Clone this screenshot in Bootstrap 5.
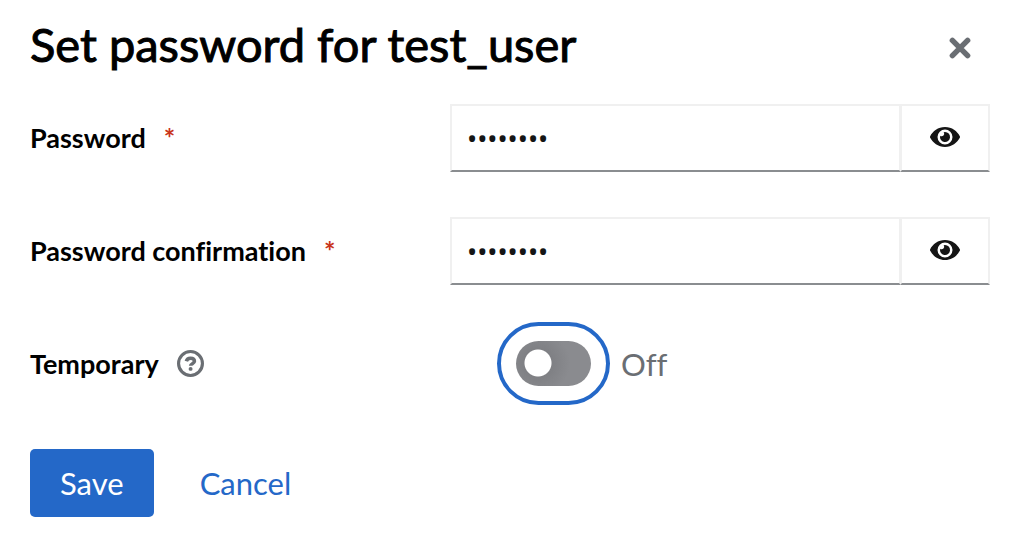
<!DOCTYPE html>
<html lang="en">
<head>
<meta charset="utf-8">
<meta name="viewport" content="width=device-width, initial-scale=1">
<title>Set password</title>
<link href="https://cdn.jsdelivr.net/npm/bootstrap@5.3.0/dist/css/bootstrap.min.css" rel="stylesheet">
<style>
  :root { --blue: #2468c8; --grey: #6a6e73; --line: #f0f0f0; --line-dark: #8a8d90; --ink: #151515; }
  body { font-family: Lato, "Open Sans", sans-serif; font-size: 31px; line-height: 36px; font-variant-ligatures: none; color: #000; background: #fff; }
  .dialog { padding: 18px 34px 24px 30px; }
  .dialog-header { margin-bottom: 26px; }
  .dialog-title { font-size: 47px; line-height: 52px; font-weight: 400; -webkit-text-stroke: 1px currentColor; }
  .btn-dismiss { width: 60px; height: 60px; color: var(--grey); }
  .form-lines { row-gap: 45px; }
  .form-line { display: grid; grid-template-columns: 7fr 9fr; align-items: center; min-height: 67px; }
  .field-label { font-size: 27px; font-weight: 700; gap: 18px; }
  .required-mark { color: #c9341a; font-size: 27px; font-weight: 700; }
  .secret { font-family: "Noto Sans", sans-serif; font-size: 27px; height: 68px; padding: 0 15px; color: var(--ink); }
  .secret, .btn-reveal { border: 2px solid var(--line); border-bottom-color: var(--line-dark); border-radius: 0; }
  .btn-reveal { width: 90px; color: var(--ink); background: #fff; }
  .btn-reveal svg { display: block; margin: 0 auto 2px; }
  .toggle-line { padding-left: 66px; gap: 30px; color: var(--grey); }
  .toggle-line .toggle { flex: none; width: 75px; height: 45px; margin: 0; border: 0; border-radius: 23px; background: #8a8b8f radial-gradient(circle at 22px 22px, #fff 13px, #7f8084 14px, #8a8b8f 32px); outline: 4px solid var(--blue); outline-offset: 15px; box-shadow: none; }
  .actions { gap: 16px; margin-top: 7px; }
  .btn-act { font-size: 31px; line-height: 36px; padding: 16px 30px; border: 0; border-radius: 5px; }
  .btn-save { background: var(--blue); color: #fff; }
  .btn-cancel { color: var(--blue); }
</style>
</head>
<body>
<main class="dialog">
  <header class="dialog-header d-flex justify-content-between align-items-start">
    <h1 class="dialog-title m-0">Set password for test_user</h1>
    <button type="button" class="btn btn-dismiss p-0 d-flex align-items-center justify-content-center" aria-label="Close">
      <svg width="22" height="22" viewBox="0 0 22 22" fill="none" stroke="currentColor" stroke-width="5.500" stroke-linecap="round"><path d="M3.400 3.400 18.600 18.600M18.600 3.400 3.400 18.600"/></svg>
    </button>
  </header>
  <form class="form-lines d-grid">
    <div class="form-line">
      <label class="field-label d-flex" for="pw">Password <span class="required-mark" aria-hidden="true">*</span></label>
      <div class="input-group">
        <input id="pw" class="form-control secret" type="password" value="password" required>
        <button type="button" class="btn btn-reveal p-0" aria-label="Show password">
          <svg width="30" height="20" viewBox="0 0 30 20"><path fill="currentColor" fill-rule="evenodd" d="M15 0C8 0 2.800 4.200.2 9.200a1.700 1.700 0 0 0 0 1.600C2.800 15.800 8 20 15 20s12.200-4.200 14.800-9.200a1.700 1.700 0 0 0 0-1.600C27.200 4.200 22 0 15 0Zm0 2.500a7.500 7.500 0 1 1 0 15 7.500 7.500 0 0 1 0-15Z"/><path fill="currentColor" d="M15 5a5 5 0 1 1-4.800 3.700A2.500 2.500 0 0 0 13.700 5.200Q14.300 5 15 5Z"/></svg>
        </button>
      </div>
    </div>
    <div class="form-line">
      <label class="field-label d-flex" for="pw2">Password confirmation <span class="required-mark" aria-hidden="true">*</span></label>
      <div class="input-group">
        <input id="pw2" class="form-control secret" type="password" value="password" required>
        <button type="button" class="btn btn-reveal p-0" aria-label="Show password confirmation">
          <svg width="30" height="20" viewBox="0 0 30 20"><path fill="currentColor" fill-rule="evenodd" d="M15 0C8 0 2.800 4.200.2 9.200a1.700 1.700 0 0 0 0 1.600C2.800 15.800 8 20 15 20s12.200-4.200 14.800-9.200a1.700 1.700 0 0 0 0-1.600C27.200 4.200 22 0 15 0Zm0 2.500a7.500 7.500 0 1 1 0 15 7.500 7.500 0 0 1 0-15Z"/><path fill="currentColor" d="M15 5a5 5 0 1 1-4.800 3.700A2.500 2.500 0 0 0 13.700 5.200Q14.300 5 15 5Z"/></svg>
        </button>
      </div>
    </div>
    <div class="form-line">
      <div class="field-label d-flex align-items-center">
        <label for="temp">Temporary</label>
        <button type="button" class="btn p-0 border-0 d-flex" aria-label="Help for Temporary">
          <svg width="27" height="27" viewBox="0 0 26 26" fill="none" stroke="#6a6e73"><circle cx="13" cy="13" r="11.500" stroke-width="3"/><path stroke-width="3.400" d="M9 10.800C9.500 8.900 11.100 8 13 8c2.200 0 3.800 1.100 3.800 2.900 0 2.400-3.700 2.200-3.700 4.300"/><circle cx="13.100" cy="18.200" r="1.900" fill="#6a6e73" stroke="none"/></svg>
        </button>
      </div>
      <div class="form-check form-switch toggle-line d-flex align-items-center m-0">
        <input id="temp" class="form-check-input toggle" type="checkbox" role="switch" aria-labelledby="temp-state">
        <label for="temp" id="temp-state">Off</label>
      </div>
    </div>
    <div class="d-flex actions">
      <button type="submit" class="btn btn-act btn-save">Save</button>
      <button type="button" class="btn btn-act btn-cancel">Cancel</button>
    </div>
  </form>
</main>
<script src="https://cdn.jsdelivr.net/npm/bootstrap@5.3.0/dist/js/bootstrap.bundle.min.js"></script>
</body>
</html>
